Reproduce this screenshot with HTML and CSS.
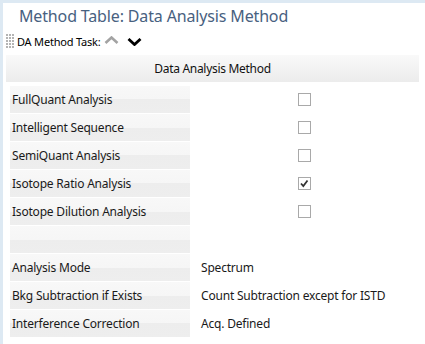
FILE: index.html
```html
<!DOCTYPE html>
<html>
<head>
<meta charset="utf-8">
<link rel="stylesheet" href="styles.css">
</head>
<body>
<div class="frame">
  <div class="title">Method Table: Data Analysis Method</div>
  <div class="toolbar">
    <svg class="grip" width="9" height="14" viewBox="0 0 9 14">
      <g fill="#b4b4b4">
        <rect x="0" y="0" width="2" height="2"/><rect x="3" y="0" width="2" height="2"/><rect x="6" y="0" width="2" height="2"/>
        <rect x="0" y="3" width="2" height="2"/><rect x="3" y="3" width="2" height="2"/><rect x="6" y="3" width="2" height="2"/>
        <rect x="0" y="6" width="2" height="2"/><rect x="3" y="6" width="2" height="2"/><rect x="6" y="6" width="2" height="2"/>
        <rect x="0" y="9" width="2" height="2"/><rect x="3" y="9" width="2" height="2"/><rect x="6" y="9" width="2" height="2"/>
        <rect x="0" y="12" width="2" height="2"/><rect x="3" y="12" width="2" height="2"/><rect x="6" y="12" width="2" height="2"/>
      </g>
    </svg>
    <span class="task">DA Method Task:</span>
    <svg class="chev up" width="15" height="8" viewBox="0 0 15 8"><polyline points="1.5,7 7.5,1.5 13.5,7" fill="none" stroke="#a3a3a3" stroke-width="2.6"/></svg>
    <svg class="chev down" width="15" height="8" viewBox="0 0 15 8"><polyline points="1.5,1 7.5,6.5 13.5,1" fill="none" stroke="#000" stroke-width="2.8"/></svg>
  </div>
  <div class="table">
    <div class="header">Data Analysis Method</div>
    <div class="rows">
      <div class="row"><div class="label">FullQuant Analysis</div><div class="value center"><span class="cb"></span></div></div>
      <div class="row"><div class="label">Intelligent Sequence</div><div class="value center"><span class="cb"></span></div></div>
      <div class="row"><div class="label">SemiQuant Analysis</div><div class="value center"><span class="cb"></span></div></div>
      <div class="row"><div class="label">Isotope Ratio Analysis</div><div class="value center"><span class="cb checked"><svg width="11" height="11" viewBox="0 0 11 11"><polyline points="2,5.5 4.3,8 8.5,2.5" fill="none" stroke="#333" stroke-width="1.8"/></svg></span></div></div>
      <div class="row"><div class="label">Isotope Dilution Analysis</div><div class="value center"><span class="cb"></span></div></div>
      <div class="row"><div class="label"></div><div class="value"></div></div>
      <div class="row"><div class="label">Analysis Mode</div><div class="value">Spectrum</div></div>
      <div class="row"><div class="label">Bkg Subtraction if Exists</div><div class="value">Count Subtraction except for ISTD</div></div>
      <div class="row"><div class="label">Interference Correction</div><div class="value">Acq. Defined</div></div>
    </div>
  </div>
</div>
</body>
</html>
```

FILE: styles.css
```css
html, body {
  margin: 0;
  padding: 0;
  background: #fff;
}
body {
  width: 425px;
  height: 344px;
  overflow: hidden;
  font-family: "Noto Sans", "Open Sans", sans-serif;
  font-size: 12px;
  color: #1a1a1a;
}
.frame {
  border-top: 3px solid #dde9f3;
  border-left: 3px solid #dde9f3;
  box-sizing: border-box;
  height: 344px;
}
.title {
  height: 27px;
  padding-left: 16px;
  font-size: 16px;
  line-height: 27px;
  color: #48617f;
  letter-spacing: -0.15px;
}
.toolbar {
  height: 22px;
  display: flex;
  align-items: center;
  padding-left: 3px;
}
.grip {
  display: block;
}
.task {
  margin-left: 2px;
  font-size: 11px;
  letter-spacing: -0.2px;
  color: #000;
}
.chev {
  display: block;
}
.chev.up {
  margin-left: 4px;
  margin-top: -2px;
}
.chev.down {
  margin-left: 8px;
  margin-top: 2px;
}
.table {
  margin-top: 3px;
  margin-left: 3px;
  width: 413px;
}
.header {
  height: 27px;
  line-height: 27px;
  text-align: center;
  background: linear-gradient(#f9f9f9, #ececec);
  color: #111;
  letter-spacing: -0.3px;
}
.rows {
  margin-top: 4px;
  padding-left: 4px;
}
.row {
  display: flex;
  height: 28px;
}
.label {
  width: 178px;
  height: 27px;
  line-height: 27px;
  padding-left: 2px;
  background: linear-gradient(#f8f8f8 0%, #f6f6f6 50%, #ededed 50%, #eeeeee 100%);
  white-space: nowrap;
  letter-spacing: -0.2px;
}
.value {
  flex: 1;
  height: 27px;
  line-height: 27px;
  padding-left: 11px;
  letter-spacing: -0.2px;
  white-space: nowrap;
}
.value.center {
  padding-left: 0;
  display: flex;
  align-items: center;
  justify-content: center;
}
.cb {
  width: 11px;
  height: 11px;
  border: 1px solid #a9a9a9;
  background: #fff;
  display: flex;
  align-items: center;
  justify-content: center;
}
.cb svg {
  display: block;
}
```
